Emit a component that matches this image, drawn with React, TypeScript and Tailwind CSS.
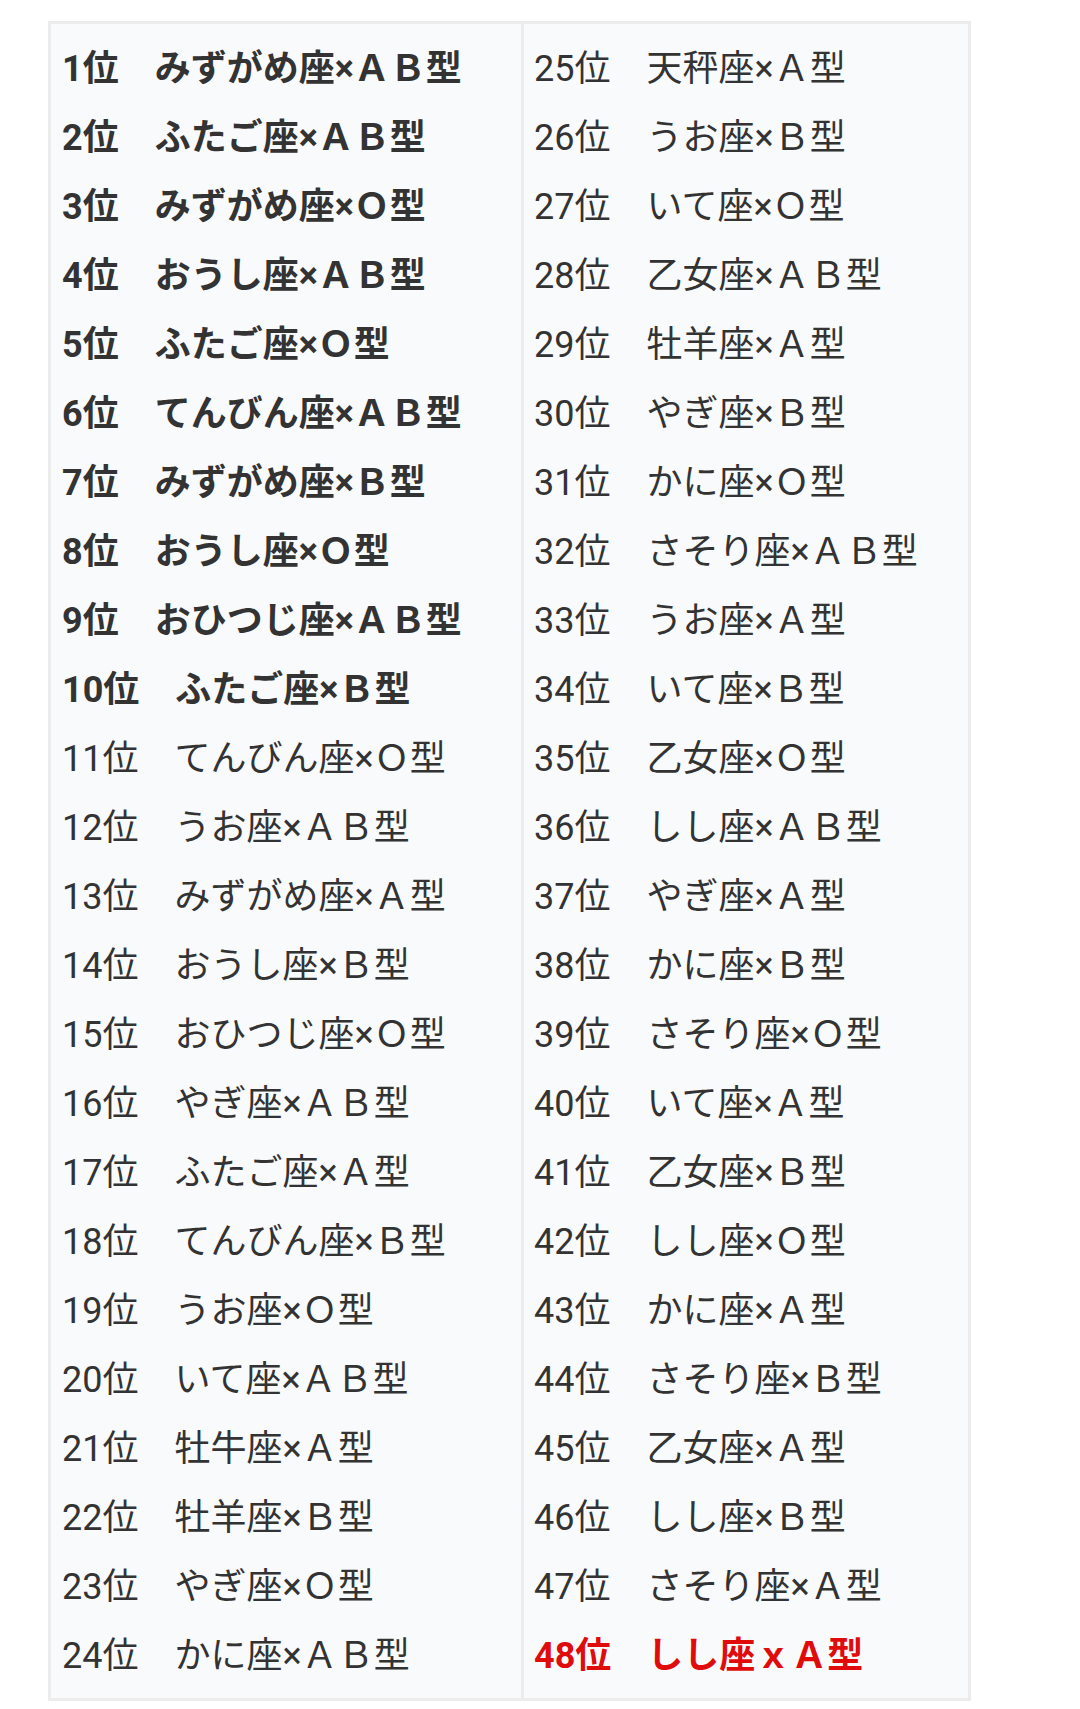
const LEFT: string[] = [
  "1位　みずがめ座×ＡＢ型",
  "2位　ふたご座×ＡＢ型",
  "3位　みずがめ座×Ｏ型",
  "4位　おうし座×ＡＢ型",
  "5位　ふたご座×Ｏ型",
  "6位　てんびん座×ＡＢ型",
  "7位　みずがめ座×Ｂ型",
  "8位　おうし座×Ｏ型",
  "9位　おひつじ座×ＡＢ型",
  "10位　ふたご座×Ｂ型",
  "11位　てんびん座×Ｏ型",
  "12位　うお座×ＡＢ型",
  "13位　みずがめ座×Ａ型",
  "14位　おうし座×Ｂ型",
  "15位　おひつじ座×Ｏ型",
  "16位　やぎ座×ＡＢ型",
  "17位　ふたご座×Ａ型",
  "18位　てんびん座×Ｂ型",
  "19位　うお座×Ｏ型",
  "20位　いて座×ＡＢ型",
  "21位　牡牛座×Ａ型",
  "22位　牡羊座×Ｂ型",
  "23位　やぎ座×Ｏ型",
  "24位　かに座×ＡＢ型",
];

const RIGHT: string[] = [
  "25位　天秤座×Ａ型",
  "26位　うお座×Ｂ型",
  "27位　いて座×Ｏ型",
  "28位　乙女座×ＡＢ型",
  "29位　牡羊座×Ａ型",
  "30位　やぎ座×Ｂ型",
  "31位　かに座×Ｏ型",
  "32位　さそり座×ＡＢ型",
  "33位　うお座×Ａ型",
  "34位　いて座×Ｂ型",
  "35位　乙女座×Ｏ型",
  "36位　しし座×ＡＢ型",
  "37位　やぎ座×Ａ型",
  "38位　かに座×Ｂ型",
  "39位　さそり座×Ｏ型",
  "40位　いて座×Ａ型",
  "41位　乙女座×Ｂ型",
  "42位　しし座×Ｏ型",
  "43位　かに座×Ａ型",
  "44位　さそり座×Ｂ型",
  "45位　乙女座×Ａ型",
  "46位　しし座×Ｂ型",
  "47位　さそり座×Ａ型",
  "48位　しし座ｘＡ型",
];

function Line({ text, bold, red }: { text: string; bold?: boolean; red?: boolean }) {
  return (
    <div
      className={
        "whitespace-pre leading-[69px] " +
        (red ? "font-bold text-[#e00b0b]" : bold ? "font-bold text-[#333333]" : "text-[#333333]")
      }
    >
      {text}
    </div>
  );
}

export default function App() {
  return (
    <div className="min-h-[1709px] bg-white pt-[21px] pl-[48px] font-['Roboto','Noto_Sans_CJK_JP',sans-serif] text-[36px]">
      <div className="flex w-[923px] border-[3px] border-[#ececec] bg-[#f9fafc]">
        <div className="w-[473px] border-r-[3px] border-[#ececec] pl-[11px] pt-[11px] pb-[7px]">
          {LEFT.map((t, i) => (
            <Line key={t} text={t} bold={i < 10} />
          ))}
        </div>
        <div className="w-[444px] pl-[10px] pt-[11px] pb-[7px]">
          {RIGHT.map((t, i) => (
            <Line key={t} text={t} red={i === 23} />
          ))}
        </div>
      </div>
    </div>
  );
}
